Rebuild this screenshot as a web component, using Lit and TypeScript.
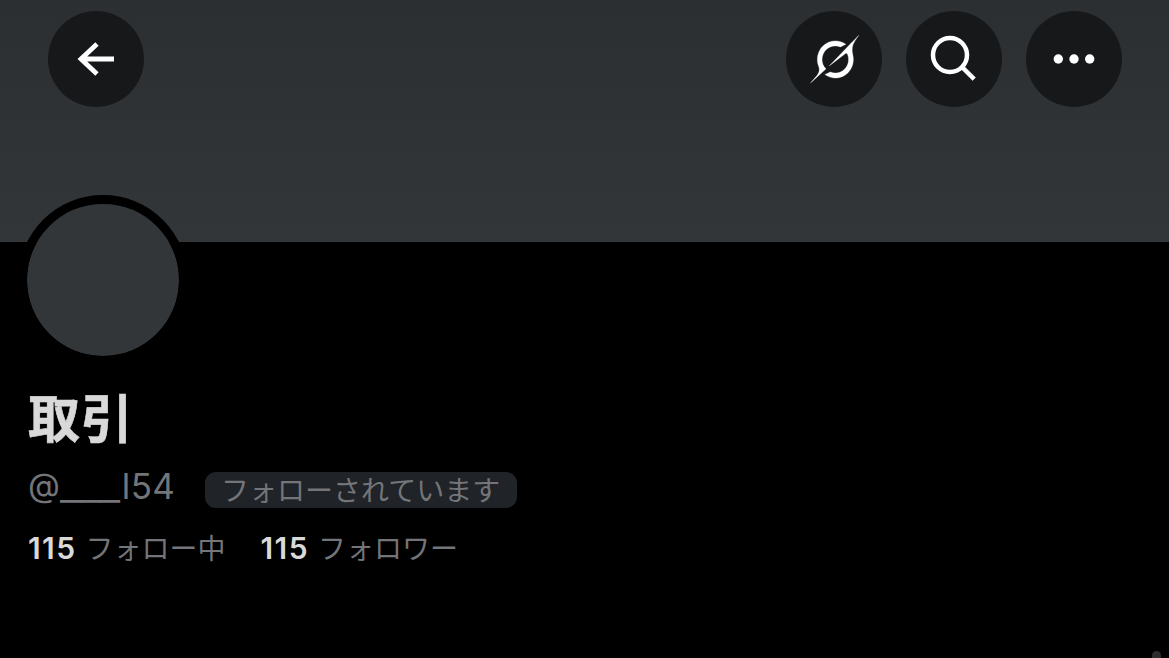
import { LitElement, html, css, svg } from 'lit';
import { customElement, property } from 'lit/decorators.js';

const icons = {
  back: svg`<path d="M49 33L33 48L49 63M32 48H66" fill="none" stroke="#fff" stroke-width="4.8" />`,
  grok: svg`<path transform="translate(24.6 24.3) scale(1.46 1.49)" fill="#fff" stroke="#fff" stroke-width="0.2" d="M12.745 20.54l10.97-8.19c.539-.4 1.307-.244 1.564.38 1.349 3.288.746 7.241-1.938 9.955-2.683 2.714-6.417 3.31-9.83 1.954l-3.728 1.745c5.347 3.697 11.84 2.782 15.898-1.324 3.219-3.255 4.216-7.692 3.284-11.693l.008.009c-1.351-5.878.332-8.227 3.782-13.031L33 0l-4.54 4.59v-.014L12.743 20.544m-2.263 1.987c-3.837-3.707-3.175-9.446.1-12.755 2.42-2.449 6.388-3.448 9.852-1.979l3.72-1.737c-.67-.49-1.53-1.017-2.515-1.387-4.455-1.854-9.789-.931-13.41 2.728-3.483 3.523-4.579 8.94-2.697 13.561 1.405 3.454-.899 5.898-3.22 8.364C1.49 30.2.666 31.074 0 32l10.478-9.466" />`,
  search: svg`<g fill="none" stroke="#fff" stroke-width="4.5"><circle cx="44" cy="44" r="17" /><path d="M56 56L68.2 68.2" /></g>`,
  more: svg`<g fill="#fff"><circle cx="32.3" cy="48" r="4.7" /><circle cx="48" cy="48" r="4.7" /><circle cx="63.7" cy="48" r="4.7" /></g>`
};

@customElement('round-button')
export class RoundButton extends LitElement {
  @property()
  public icon: keyof typeof icons = 'back';

  @property()
  public label = '';

  static styles = css`
    :host {
      display: block;
      width: 96px;
      height: 96px;
    }
    button {
      display: block;
      width: 96px;
      height: 96px;
      padding: 0;
      border: none;
      border-radius: 50%;
      background: #17181a;
      cursor: pointer;
    }
    svg {
      display: block;
    }
  `;

  render() {
    return html`
      <button aria-label="${this.label}">
        <svg width="96" height="96" viewBox="0 0 96 96">${icons[this.icon]}</svg>
      </button>
    `;
  }
}

@customElement('app-root')
export class AppRoot extends LitElement {
  private stats = [
    { count: 115, label: 'フォロー中' },
    { count: 115, label: 'フォロワー' }
  ];

  static styles = css`
    :host {
      display: block;
      position: relative;
      width: 1169px;
      height: 658px;
      overflow: hidden;
      background: #000;
      color: #737579;
      font-family: Inter, 'Noto Sans CJK JP', sans-serif;
    }
    .banner {
      box-sizing: border-box;
      height: 242px;
      padding: 11px 47px 0 48px;
      display: flex;
      align-items: flex-start;
      gap: 24px;
      background: linear-gradient(#2c2f32, #333639);
    }
    .spacer {
      flex: 1;
    }
    .profile {
      padding-left: 28px;
    }
    .avatar {
      position: relative;
      width: 152px;
      height: 152px;
      margin: -47px 0 0 -10px;
      border: 9px solid #000;
      border-radius: 50%;
      background: #333639;
      background-clip: padding-box;
    }
    .name {
      margin: 25px 0 0;
      height: 60px;
      line-height: 60px;
      font-size: 52px;
      font-weight: 700;
      letter-spacing: 1px;
      color: #d9d9d9;
      -webkit-text-stroke: 0.6px #d9d9d9;
    }
    .handle-row {
      display: flex;
      align-items: flex-start;
      height: 36px;
      margin-top: 22px;
    }
    .handle {
      width: 177px;
      margin-top: -4px;
      font-size: 35px;
      line-height: 36px;
      letter-spacing: 0.4px;
      white-space: nowrap;
    }
    .at {
      display: inline-block;
      font-size: 33px;
      transform: translateY(-2px);
    }
    /* the underscores are drawn as one unbroken line */
    .underscores {
      display: inline-block;
      width: 61.5px;
      letter-spacing: -1px;
      transform: translateY(1px) scaleX(1.31);
      transform-origin: left;
    }
    .badge {
      box-sizing: border-box;
      width: 312px;
      height: 36px;
      padding-left: 16px;
      border-radius: 11px;
      background: #202327;
      font-size: 28px;
      line-height: 38px;
      white-space: nowrap;
    }
    .stats {
      display: flex;
      gap: 35px;
      margin-top: 22px;
      line-height: 36px;
    }
    .stat {
      display: flex;
      align-items: baseline;
      gap: 9px;
      font-size: 28px;
    }
    .count {
      font-size: 30px;
      font-weight: 600;
      letter-spacing: 1.4px;
      color: #d9d9d9;
    }
    .scroll-dot {
      position: absolute;
      left: 1152px;
      top: 651px;
      width: 9px;
      height: 20px;
      border-radius: 5px;
      background: #2d2d2d;
    }
  `;

  render() {
    return html`
      <header class="banner">
        <round-button icon="back" label="戻る"></round-button>
        <div class="spacer"></div>
        <round-button icon="grok" label="Grok"></round-button>
        <round-button icon="search" label="検索"></round-button>
        <round-button icon="more" label="もっと見る"></round-button>
      </header>
      <section class="profile">
        <div class="avatar"></div>
        <h1 class="name">取引</h1>
        <div class="handle-row">
          <span class="handle"><span class="at">@</span><span class="underscores">___</span>l54</span>
          <span class="badge">フォローされています</span>
        </div>
        <div class="stats">
          ${this.stats.map(stat => html`
            <div class="stat">
              <span class="count">${stat.count}</span>
              <span>${stat.label}</span>
            </div>
          `)}
        </div>
      </section>
      <div class="scroll-dot"></div>
    `;
  }
}

declare global {
  interface HTMLElementTagNameMap {
    'app-root': AppRoot;
    'round-button': RoundButton;
  }
}
